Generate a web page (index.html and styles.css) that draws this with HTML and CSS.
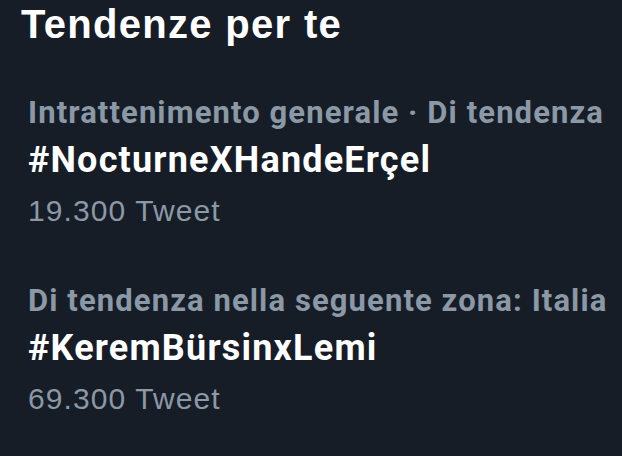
FILE: index.html
```html
<!DOCTYPE html>
<html lang="it">
<head>
  <meta charset="UTF-8">
  <title>Tendenze per te</title>
  <meta name="viewport" content="width=device-width, initial-scale=1.0">
  <link rel="stylesheet" href="styles.css">
</head>
<body>

  <h2 class="judul">Tendenze per te</h2>

  <!-- Tendenza 1 -->
  <div class="trend">
    <div class="meta">Intrattenimento generale · Di tendenza</div>
    <div class="tag">#NocturneXHandeErçel</div>
    <div class="jumlah">19.300 Tweet</div>
  </div>

  <!-- Tendenza 2 -->
  <div class="trend">
    <div class="meta">Di tendenza nella seguente zona: Italia</div>
    <div class="tag">#KeremBürsinxLemi</div>
    <div class="jumlah">69.300 Tweet</div>
  </div>

</body>
</html>
```

FILE: styles.css
```css
* { box-sizing: border-box; }
body {
  margin: 0;
  padding: 0;
  width: 622px;
  height: 456px;
  overflow: hidden;
  background-color: #161d27;
  color: #f1f1f1;
  font-family: Roboto, "Liberation Sans", sans-serif;
}
.judul {
  margin: 0;
  padding: 2px 0 0 21px;
  font-family: "Liberation Sans", Arial, sans-serif;
  font-size: 40px;
  font-weight: bold;
  letter-spacing: 1.3px;
  line-height: 44px;
  color: #ffffff;
}
.trend {
  padding-left: 28px;
  margin-top: 47px;
}
.meta {
  font-size: 31px;
  font-weight: bold;
  letter-spacing: 1.1px;
  line-height: 40px;
  color: #8b98a5;
}
.tag {
  font-size: 36px;
  font-weight: bold;
  letter-spacing: 1.2px;
  line-height: 55px;
  color: #ffffff;
}
.jumlah {
  font-family: "Liberation Sans", Arial, sans-serif;
  font-size: 30px;
  letter-spacing: 1.1px;
  line-height: 46px;
  color: #8b98a5;
}
```
